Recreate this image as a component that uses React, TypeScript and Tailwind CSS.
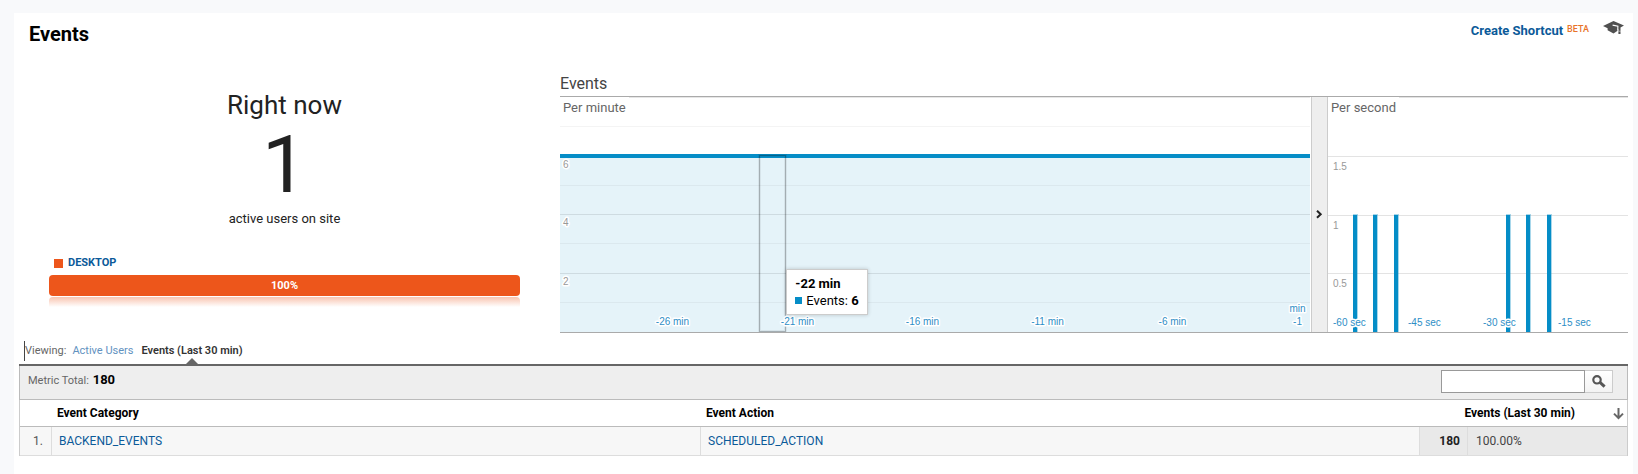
import { ReactNode } from "react";

const BLUE = "#058dc7";
const MINUTES = Array.from({ length: 30 }, (_, i) => i - 30);
const MINUTE_LABELS = [-26, -21, -16, -11, -6];
const HOVERED = -22;
const SECOND_BARS = [27, 47, 68, 180, 200, 221];
const SECOND_LABELS = [
  { x: 5, text: "-60 sec" },
  { x: 80, text: "-45 sec" },
  { x: 155, text: "-30 sec" },
  { x: 230, text: "-15 sec" },
];

const pct = (n: number, total: number) => `${(n / total) * 100}%`;
const slotCenter = (minute: number) => pct(MINUTES.indexOf(minute) + 0.5, 30);

function Label({ x, y, anchor = "start", fill, children }: {
  x: number | string;
  y: number;
  anchor?: "start" | "middle" | "end";
  fill: string;
  children: ReactNode;
}) {
  return (
    <text x={x} y={y} textAnchor={anchor} fill={fill} stroke="#fff" strokeWidth="3" strokeLinejoin="round" paintOrder="stroke">
      {children}
    </text>
  );
}

function HLine({ y, color }: { y: number; color: string }) {
  return <rect x="0" y={y} width="100%" height="1" fill={color} />;
}

function MinuteChart() {
  return (
    <div className="relative min-w-0 flex-1 pr-px">
      <svg className="block h-[235px] w-full font-['Liberation_Sans',sans-serif] text-[10px]" role="img" aria-label="Events per minute">
        <HLine y={0} color="#e6e6e6" />
        <HLine y={29} color="#f4f4f4" />
        <rect x="0" y="59" width="100%" height="176" fill="#e5f3f9" />
        {[88, 146, 205].map((y) => <HLine key={y} y={y} color="#dbe8ee" />)}
        {[117, 176].map((y) => <HLine key={y} y={y} color="#cedbe1" />)}
        <rect x="0" y="57" width="100%" height="4" fill={BLUE} />
        <svg x={pct(MINUTES.indexOf(HOVERED), 30)} y="0" width={pct(1, 30)} height="235" overflow="visible">
          <rect x="-0.5" y="58.5" width="104%" height="176" fill="none" stroke="#000" strokeOpacity="0.06" strokeWidth="3" />
          <rect x="-0.5" y="58.5" width="104%" height="176" fill="none" stroke="#000" strokeOpacity="0.24" strokeWidth="1" shapeRendering="crispEdges" />
        </svg>
        <Label x={3} y={71} fill="#999">6</Label>
        <Label x={3} y={129} fill="#999">4</Label>
        <Label x={3} y={188} fill="#999">2</Label>
        {MINUTE_LABELS.map((m) => (
          <Label key={m} x={slotCenter(m)} y={228} anchor="middle" fill="#2e8ec6">{m} min</Label>
        ))}
        <Label x={slotCenter(-1)} y={215} anchor="middle" fill="#2e8ec6">min</Label>
        <Label x={slotCenter(-1)} y={228} anchor="middle" fill="#2e8ec6">-1</Label>
      </svg>
      <h3 className="absolute top-0 left-0 bg-white px-[3px] text-[13px] leading-[22px] text-[#666]">Per minute</h3>
      <div
        className="absolute bottom-[17px] border border-[#ccc] bg-white px-2 py-[5px] text-[13px] leading-[17px] whitespace-nowrap text-black shadow-[0_0_4px_rgba(0,0,0,0.2)]"
        style={{ left: pct(9.04, 30) }}
      >
        <div className="font-bold">-22 min</div>
        <div className="flex items-center gap-1">
          <span className="size-[7px] bg-[#058dc7]" />
          <span>Events: <b>6</b></span>
        </div>
      </div>
    </div>
  );
}

function SecondChart() {
  return (
    <div className="relative w-[300px] shrink-0">
      <svg className="block h-[235px] w-full font-['Liberation_Sans',sans-serif] text-[10px]" role="img" aria-label="Events per second">
        {[0, 59, 118, 176].map((y) => <HLine key={y} y={y} color="#e3e3e3" />)}
        {SECOND_BARS.map((x) => (
          <g key={x} fill={BLUE}>
            <rect x={pct(x - 2, 300)} y="117" width="5" height="118" fillOpacity="0.35" />
            <rect x={pct(x - 2, 300)} y="118" width="4" height="117" />
          </g>
        ))}
        <Label x={5} y={73} fill="#999">1.5</Label>
        <Label x={5} y={132} fill="#999">1</Label>
        <Label x={5} y={190} fill="#999">0.5</Label>
        {SECOND_LABELS.map((l) => (
          <Label key={l.text} x={pct(l.x, 300)} y={229} fill="#2e8ec6">{l.text}</Label>
        ))}
      </svg>
      <h3 className="absolute top-0 left-0 bg-white px-[3px] text-[13px] leading-[22px] text-[#666]">Per second</h3>
    </div>
  );
}

function Overview() {
  return (
    <section className="flex w-[541px] shrink-0 flex-col pt-[34px] pr-10 pl-[30px]">
      <h2 className="text-center text-[26px] leading-8 text-[#222]">Right now</h2>
      <div className="text-center text-[80px] leading-[88px] text-[#222]">1</div>
      <div className="text-center text-[13px] leading-5 text-[#222]">active users on site</div>
      <div className="mt-[26px] flex items-center gap-[5px] pl-[5px] text-[11px] leading-4 font-bold">
        <span className="size-[9px] bg-[#ed561b]" />
        <a href="#desktop" className="text-[#0b5a99]">DESKTOP</a>
      </div>
      <div className="mt-1 h-[21px] rounded bg-[#ed561b] text-center text-[11px] leading-[21px] font-bold text-white">100%</div>
      <div className="mt-px h-[10px] rounded-t bg-linear-to-b from-[#ed561b]/35 to-[#ed561b]/0" />
    </section>
  );
}

function EventsTable() {
  return (
    <table className="w-full table-fixed border-separate border-spacing-0 border-x border-[#ccc] text-left text-[12px]">
      <colgroup>
        <col className="w-8" />
        <col className="w-[649px]" />
        <col />
        <col className="w-12" />
        <col className="w-40" />
      </colgroup>
      <thead>
        <tr className="h-[27px] text-black">
          <th className="border-b border-[#bbb]" aria-label="Row" />
          <th scope="col" className="border-b border-[#bbb] pl-[5px] font-bold">Event Category</th>
          <th scope="col" className="border-b border-[#bbb] pl-[5px] font-bold">Event Action</th>
          <th scope="col" colSpan={2} className="border-b border-[#bbb] pr-[3px] font-bold">
            <button type="button" className="flex w-full items-center justify-end gap-[38px]">
              <span className="whitespace-nowrap">Events (Last 30 min)</span>
              <svg width="11" height="13" viewBox="0 0 11 13" fill="none" stroke="#666" strokeWidth="2" aria-hidden="true">
                <path d="M5.5 1V11M1 6.6L5.5 11.1L10 6.6" />
              </svg>
            </button>
          </th>
        </tr>
      </thead>
      <tbody>
        <tr className="h-[29px] bg-[#f7f7f7]">
          <td className="border-r border-b border-[#ddd] pr-2 text-right text-[#555]">1.</td>
          <td className="border-r border-b border-[#ddd] pl-[7px]">
            <a href="#backend" className="text-[#0b5a99]">BACKEND_EVENTS</a>
          </td>
          <td className="border-b border-[#ddd] pl-[7px]">
            <a href="#scheduled" className="text-[#0b5a99]">SCHEDULED_ACTION</a>
          </td>
          <td className="border-b border-l border-[#ddd] bg-[#e9e9e9] pr-[7px] text-right font-bold text-[#222]">180</td>
          <td className="border-b border-l border-[#ddd] bg-[#e9e9e9] pl-2 text-[#444]">100.00%</td>
        </tr>
      </tbody>
    </table>
  );
}

export default function App() {
  return (
    <div className="min-h-screen bg-[#f8f9fb] pt-[13px] pr-[5px] pl-[14px] font-[Roboto,sans-serif]">
      <main className="min-h-[calc(100vh-13px)] bg-white px-[5px]">
        <header className="flex h-[42px] items-start justify-between pt-2 pr-1 pl-[10px]">
          <h1 className="text-[20px] leading-[26px] font-bold text-black">Events</h1>
          <div className="flex items-start">
            <a href="#shortcut" className="text-[13px] leading-5 font-bold text-[#0b5a99]">Create Shortcut</a>
            <span className="ml-1 text-[9px] leading-4 font-medium text-[#e8742a]">BETA</span>
            <button type="button" aria-label="Education" className="ml-[14px]">
              <svg width="21" height="14" viewBox="0 0 21 14" aria-hidden="true">
                <path fill="#505050" d="M0 5L10.5 0L21 4.6L17.5 6.4V13H15.4V7.5L14.6 9.8L10.5 12.4L4.6 9.2V7.2Z" />
                <path fill="none" stroke="#fff" strokeWidth="1.1" d="M9.6 4.1L14.9 5.3L14.7 9.6" />
                <path fill="none" stroke="#fff" strokeWidth="0.5" d="M15.2 10.2H17.8" />
              </svg>
            </button>
          </div>
        </header>

        <div className="flex">
          <Overview />
          <section className="min-w-0 flex-1 pt-[18px]">
            <h2 className="h-[23px] text-[16px] leading-[22px] text-[#444]">Events</h2>
            <div className="flex border-y border-[#aaa]">
              <MinuteChart />
              <button type="button" aria-label="Expand" className="flex w-[17px] shrink-0 items-center justify-center border-x border-[#ccc] bg-[#eee]">
                <svg width="7" height="10" viewBox="0 0 7 10" fill="none" stroke="#222" strokeWidth="2" aria-hidden="true">
                  <path d="M1 0.7L4.7 4.2L1 7.7" />
                </svg>
              </button>
              <SecondChart />
            </div>
          </section>
        </div>

        <nav className="flex h-[31px] items-start pt-2 pl-[5px] text-[11px] leading-5">
          <span className="border-l border-[#444] text-[#666]">Viewing:</span>
          <a href="#users" className="ml-[6px] text-[#6292bf]">Active Users</a>
          <a href="#events" aria-current="page" className="relative ml-2 font-semibold text-[#333]">
            Events (Last 30 min)
            <span className="absolute top-[17px] left-1/2 size-0 -translate-x-1/2 border-x-6 border-b-6 border-x-transparent border-b-[#666]" />
          </a>
        </nav>

        <section className="border-t-2 border-[#666]">
          <div className="flex h-[34px] items-start justify-between border-x border-b border-[#bbb] bg-[#eee] pt-1 pr-[14px] pl-2">
            <p className="text-[11px] leading-5 text-[#666]">
              Metric Total: <b className="ml-px text-[13px] text-black">180</b>
            </p>
            <form className="flex" onSubmit={(e) => e.preventDefault()}>
              <input type="search" aria-label="Search table" className="h-[23px] w-[144px] border border-[#999] bg-white px-1 text-[12px]" />
              <button type="submit" aria-label="Search" className="flex h-[23px] w-7 items-center justify-center border border-l-0 border-[#ccc] bg-linear-to-b from-white to-[#f3f3f3]">
                <svg width="14" height="13" viewBox="0 0 14 13" fill="none" stroke="#555" aria-hidden="true">
                  <circle cx="5" cy="4.8" r="3.7" strokeWidth="2.2" />
                  <path d="M8 7.4L12.6 11.6" strokeWidth="3" />
                </svg>
              </button>
            </form>
          </div>
          <EventsTable />
        </section>
      </main>
    </div>
  );
}
